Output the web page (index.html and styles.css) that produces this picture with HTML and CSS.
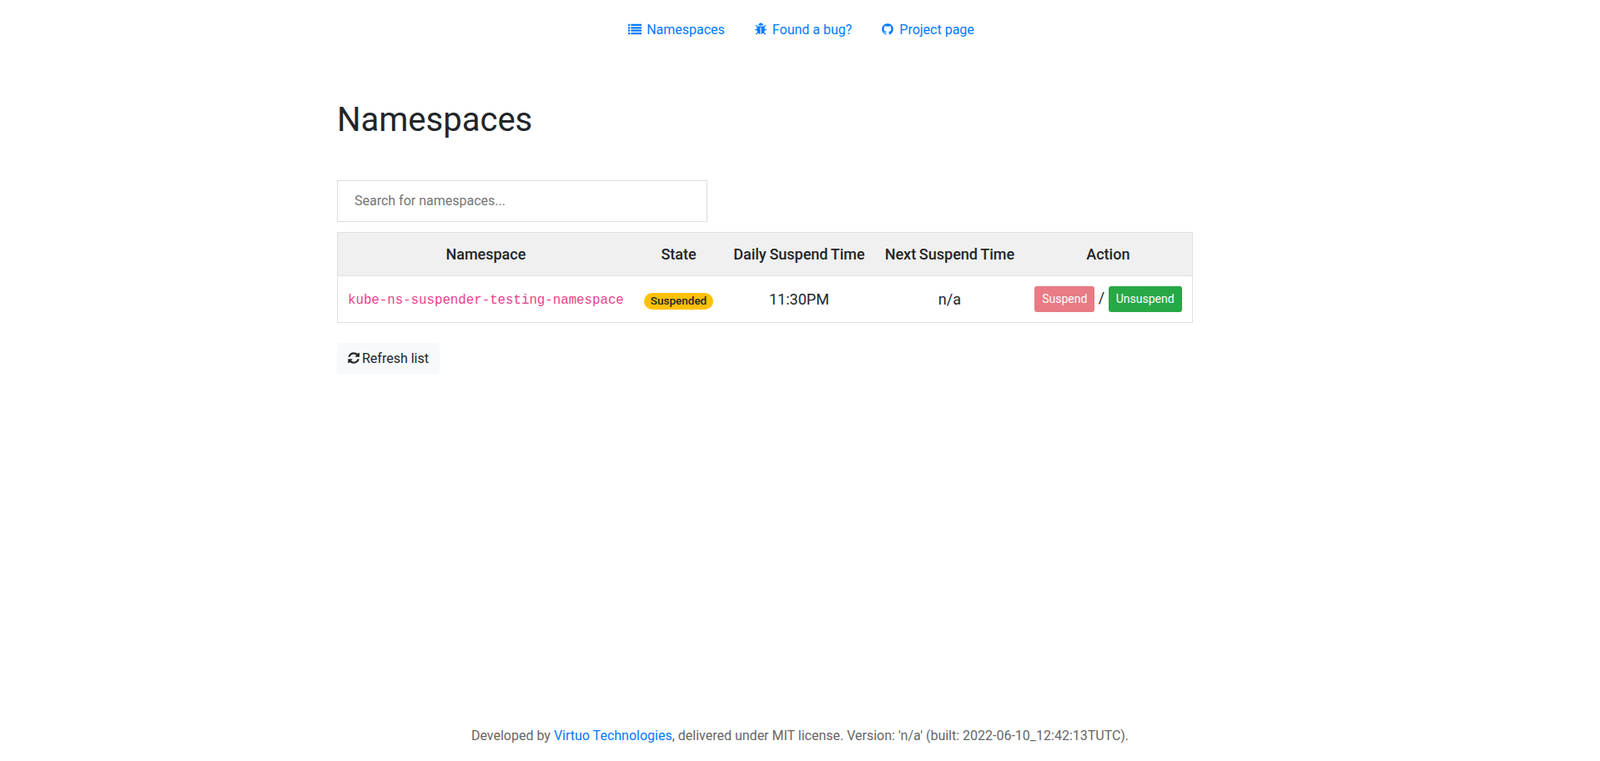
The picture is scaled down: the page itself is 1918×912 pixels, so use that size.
FILE: index.html
```html
<!DOCTYPE html>
<html lang="en">
<head>
    <meta charset="UTF-8">
    <meta name="viewport" content="width=device-width, initial-scale=1.0">
    <title>Namespaces</title>
    <link rel="stylesheet" href="styles.css">
</head>
<body>
    <nav class="nav">
        <a class="nav-link" href="#">
            <svg class="icon" viewBox="0 0 1792 1792"><path d="M0 192h256v256H0zM384 192h1408v256H384zM0 576h256v256H0zM384 576h1408v256H384zM0 960h256v256H0zM384 960h1408v256H384zM0 1344h256v256H0zM384 1344h1408v256H384z"/></svg>
            Namespaces
        </a>
        <a class="nav-link" href="#">
            <svg class="icon" viewBox="0 0 1792 1792"><path d="M1696 960q0 26-19 45t-45 19h-224q0 171-67 290l208 209q19 19 19 45t-19 45q-18 19-45 19t-45-19l-198-197q-5 5-15 13t-42 28.5-65 36.5-82 29-97 13v-896h-128v896q-51 0-101.5-13.5t-87-33-66-39-43.5-32.5l-15-14-183 207q-20 21-48 21-24 0-43-16-19-18-20.5-44.5t15.5-46.5l202-227q-58-114-58-274h-224q-26 0-45-19t-19-45 19-45 45-19h224v-294l-173-173q-19-19-19-45t19-45 45-19 45 19l173 173h844l173-173q19-19 45-19t45 19 19 45-19 45l-173 173v294h224q26 0 45 19t19 45zm-480-576h-640q0-133 93.5-226.5t226.5-93.5 226.5 93.5 93.5 226.5z"/></svg>
            Found a bug?
        </a>
        <a class="nav-link" href="#">
            <svg class="icon" viewBox="0 0 1792 1792"><path d="M896 128q209 0 385.5 103t279.5 279.5 103 385.5q0 251-146.5 451.5t-378.5 277.5q-27 5-40-7t-13-30q0-3 .5-76.5t.5-134.5q0-97-52-142 57-6 102.5-18t94-39 81-66.5 53-105 20.5-150.5q0-119-79-206 37-91-8-204-28-9-81 11t-92 44l-38 24q-93-26-192-26t-192 26q-16-11-42.5-27t-83.5-38.5-85-13.5q-45 113-8 204-79 87-79 206 0 85 20.5 150t52.5 105 80.5 67 94 39 102.5 18q-39 36-49 103-21 10-45 15t-57 5-65.5-21.5-55.5-62.5q-19-32-48.5-52t-49.5-24l-20-3q-21 0-29 4.5t-5 11.5 9 14 13 12l7 5q22 10 43.5 38t31.5 51l10 23q13 38 44 61.5t67 30 69.5 7 55.5-3.5l23-4q0 38 .5 88.5t.5 54.5q0 18-13 30t-40 7q-232-77-378.5-277.5t-146.5-451.5q0-209 103-385.5t279.5-279.5 385.5-103z"/></svg>
            Project page
        </a>
    </nav>

    <main class="container">
        <h1 class="title">Namespaces</h1>
        <input class="search" type="text" placeholder="Search for namespaces...">
        <table class="ns-table">
            <thead>
                <tr>
                    <th>Namespace</th>
                    <th>State</th>
                    <th>Daily Suspend Time</th>
                    <th>Next Suspend Time</th>
                    <th>Action</th>
                </tr>
            </thead>
            <tbody>
                <tr>
                    <td><code class="ns-name">kube-ns-suspender-testing-namespace</code></td>
                    <td><span class="badge">Suspended</span></td>
                    <td>11:30PM</td>
                    <td>n/a</td>
                    <td>
                        <button class="btn btn-suspend" disabled>Suspend</button>
                        /
                        <button class="btn btn-unsuspend">Unsuspend</button>
                    </td>
                </tr>
            </tbody>
        </table>
        <button class="btn-refresh">
            <svg class="icon icon-refresh" viewBox="0 0 1664 1792"><path d="M1639 1056q0 5-1 7-64 268-268 434.5t-478 166.5q-146 0-282.5-55t-243.5-157l-129 129q-19 19-45 19t-45-19-19-45v-448q0-26 19-45t45-19h448q26 0 45 19t19 45-19 45l-137 137q71 66 161 102t187 36q134 0 250-65t186-179q11-17 53-117 8-23 30-23h192q13 0 22.5 9.5t9.5 22.5zm25-800v448q0 26-19 45t-45 19h-448q-26 0-45-19t-19-45 19-45l138-138q-148-137-349-137-134 0-250 65t-186 179q-11 17-53 117-8 23-30 23h-199q-13 0-22.5-9.5t-9.5-22.5v-7q65-268 270-434.5t480-166.5q146 0 284 55.5t245 156.5l130-129q19-19 45-19t45 19 19 45z"/></svg>
            Refresh list
        </button>
    </main>

    <footer class="footer">
        Developed by <a href="#">Virtuo Technologies</a>, delivered under MIT license. Version: 'n/a' (built: 2022-06-10_12:42:13TUTC).
    </footer>
</body>
</html>
```

FILE: styles.css
```css
* {
    box-sizing: border-box;
}
body {
    margin: 0;
    min-height: 912px;
    display: flex;
    flex-direction: column;
    font-family: Roboto, "Liberation Sans", sans-serif;
    font-size: 16px;
    line-height: 1.5;
    color: #212529;
    background-color: #fff;
}
a {
    color: #007bff;
    text-decoration: none;
}
.icon {
    width: 1em;
    height: 1em;
    fill: currentColor;
    vertical-align: -2px;
}
.nav {
    display: flex;
    justify-content: center;
    padding: 16px 0 0 3px;
}
.nav-link {
    display: block;
    padding: 8px 17.5px;
}
.nav-link .icon {
    margin-right: 2px;
}
.container {
    flex: 1;
    width: 1140px;
    margin: 0 auto;
    padding: 0 15px;
}
.title {
    margin: 64px 0 48px;
    font-size: 40px;
    font-weight: 400;
    line-height: 1.2;
}
.search {
    display: block;
    width: 444px;
    height: 50px;
    padding: 5px 20px 7px;
    font-family: inherit;
    font-size: 16px;
    color: #495057;
    border: 1px solid #ddd;
    border-radius: 0;
    outline: none;
}
.search::placeholder {
    color: #757575;
}
.ns-table {
    margin: 12px 0 24px;
    border-collapse: collapse;
    border: 1px solid #dee2e6;
    font-size: 18px;
    text-align: center;
}
.ns-table th,
.ns-table td {
    padding: 12px;
    border-top: 1px solid #dee2e6;
    vertical-align: middle;
}
.ns-table th {
    font-weight: 500;
    word-spacing: -.75px;
    background-color: #f0f0f0;
    border-bottom: 1px solid #dee2e6;
}
.ns-name {
    font-family: "Liberation Mono", monospace;
    font-size: 15.75px;
    color: #e83e8c;
}
.badge {
    display: inline-block;
    padding: 3px 8px;
    font-size: 13.5px;
    font-weight: 500;
    line-height: 1;
    color: #212529;
    background-color: #ffc107;
    border-radius: 10rem;
}
.btn {
    padding: 4px 8px;
    font-family: inherit;
    font-size: 14px;
    line-height: 1.5;
    color: #fff;
    border: 1px solid transparent;
    border-radius: 3px;
}
.btn-suspend {
    background-color: #dc3545;
    opacity: .65;
}
.btn-unsuspend {
    background-color: #28a745;
}
.btn-refresh {
    display: block;
    padding: 6px 12px;
    font-family: inherit;
    font-size: 16px;
    line-height: 1.5;
    color: #212529;
    background-color: #f8f9fa;
    border: 1px solid #f8f9fa;
    border-radius: 4px;
}
.icon-refresh {
    width: 15px;
    margin: 0 -1px;
}
.footer {
    padding-bottom: 18px;
    text-align: center;
    color: #666;
}
```
